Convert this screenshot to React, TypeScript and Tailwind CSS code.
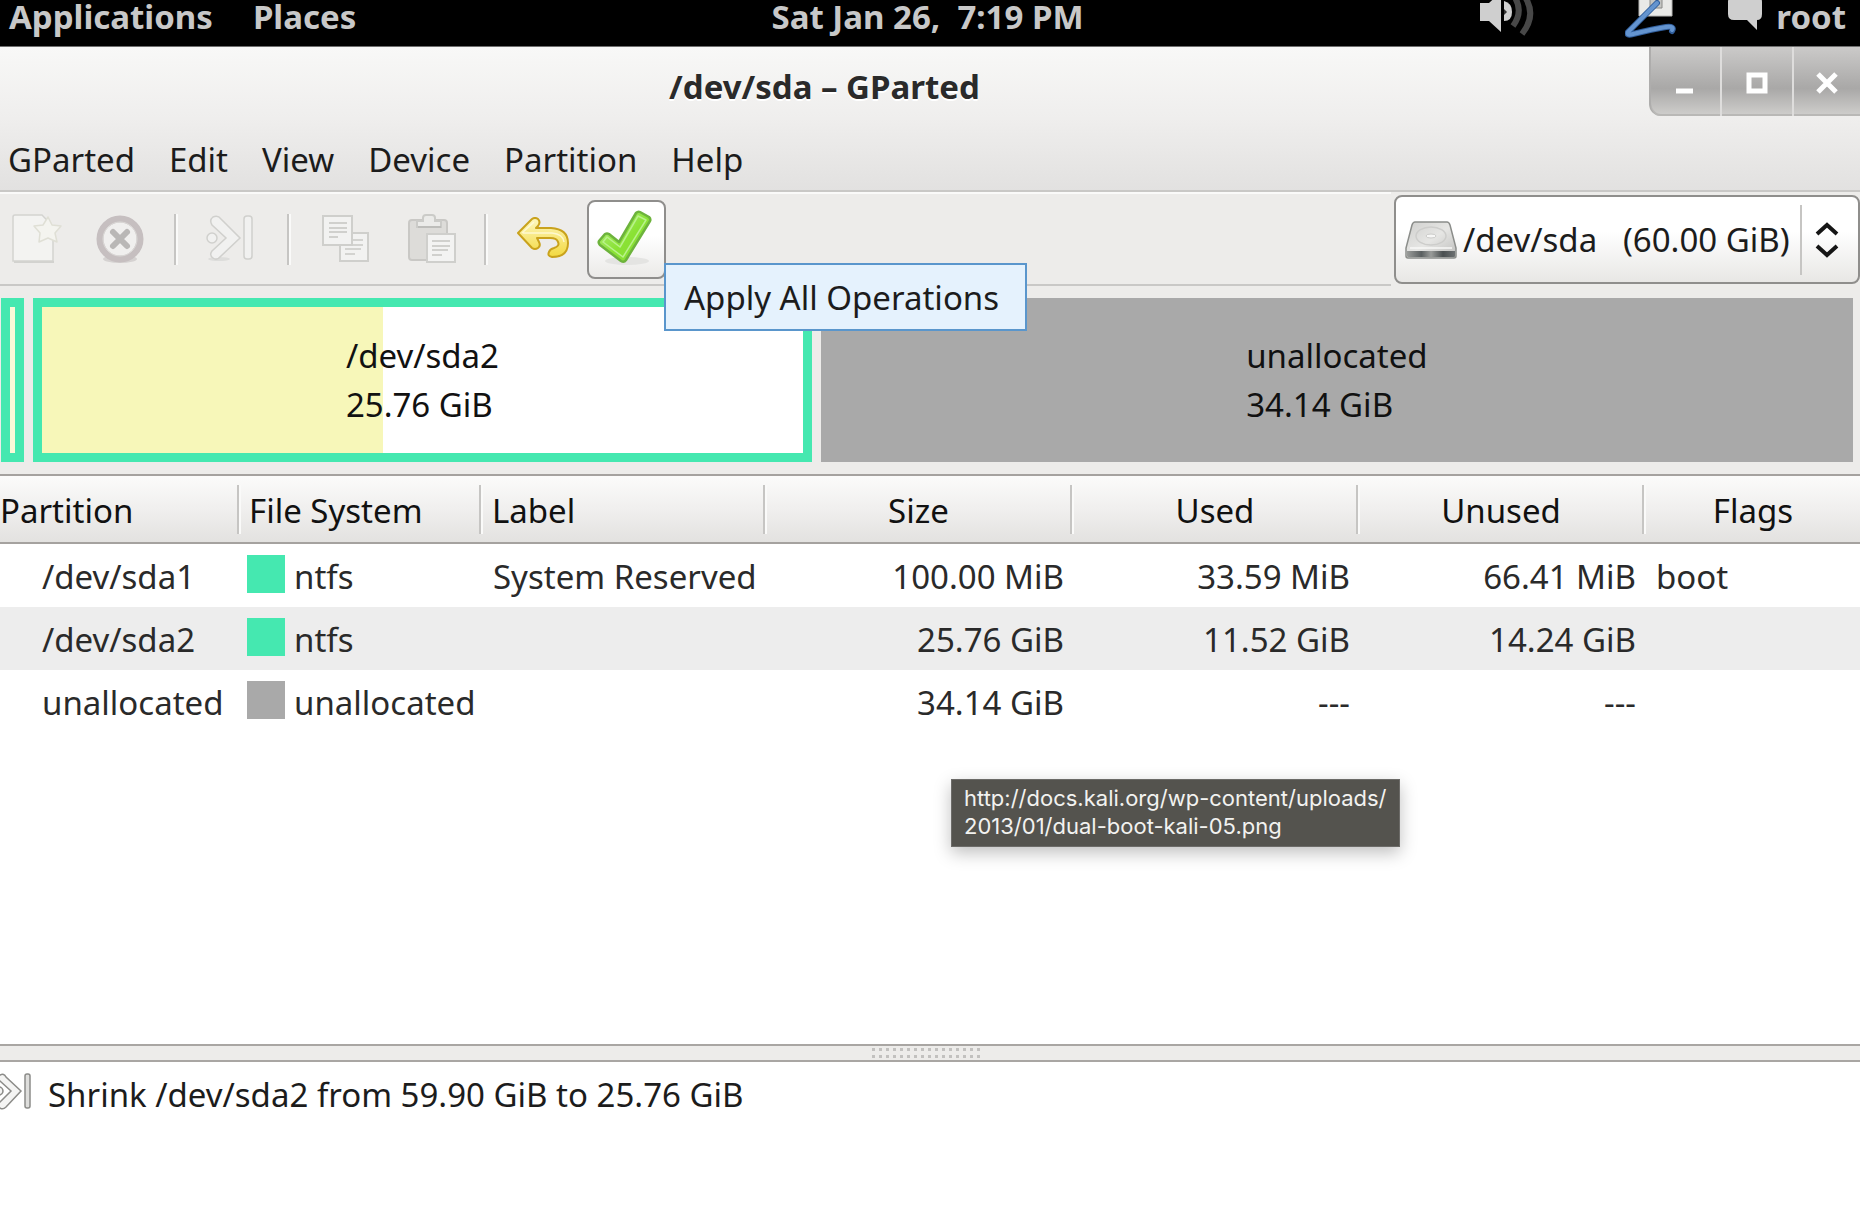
import React from "react";

const rows = [
  { name: "/dev/sda1", fs: "ntfs", color: "bg-[#45e8b0]", label: "System Reserved", size: "100.00 MiB", used: "33.59 MiB", unused: "66.41 MiB", flags: "boot" },
  { name: "/dev/sda2", fs: "ntfs", color: "bg-[#45e8b0]", label: "", size: "25.76 GiB", used: "11.52 GiB", unused: "14.24 GiB", flags: "" },
  { name: "unallocated", fs: "unallocated", color: "bg-[#a9a9a9]", label: "", size: "34.14 GiB", used: "---", unused: "---", flags: "" },
];

const columns = [
  { title: "Partition", width: "w-[241px]", cell: "justify-start" },
  { title: "File System", width: "w-[242px]", cell: "justify-start pl-[8px]" },
  { title: "Label", width: "w-[284px]", cell: "justify-start pl-[9px]" },
  { title: "Size", width: "w-[307px]", cell: "justify-center" },
  { title: "Used", width: "w-[286px]", cell: "justify-center" },
  { title: "Unused", width: "w-[286px]", cell: "justify-center" },
  { title: "Flags", width: "", cell: "justify-center" },
];

function SpeakerIcon() {
  return (
    <svg width="56" height="36" viewBox="0 0 56 36" fill="none" aria-hidden="true">
      <path d="M0 3h9L21-8V32L9 21H0z" fill="#cfcfcf" />
      <path d="M24 1q8 2 8 11t-8 9z" fill="#cfcfcf" />
      <path d="M24 9l3 3-3 3z" fill="#333" />
      <path d="M34-4q10 15-1 30" stroke="#484848" strokeWidth="6" />
      <path d="M43-6q15 20-1 40" stroke="#484848" strokeWidth="6" />
    </svg>
  );
}

function TabletIcon() {
  return (
    <svg width="52" height="42" viewBox="0 0 52 42" fill="none" aria-hidden="true">
      <path d="M14-4h33v20H14z" fill="#e9e9e7" stroke="#b5b5b3" strokeWidth="1" />
      <path d="M25-4h12V8H25z" fill="#c5c5c2" stroke="#8a8a88" />
      <path d="M32 3L3 32q-2 4 5 2Q28 29 41 27q9-1 6 4" stroke="#315f9d" strokeWidth="6" strokeLinecap="round" strokeLinejoin="round" />
      <path d="M32 3L3 32q-2 4 5 2Q28 29 41 27q9-1 6 3" stroke="#6494cf" strokeWidth="4" strokeLinecap="round" strokeLinejoin="round" />
    </svg>
  );
}

function ChatIcon() {
  return (
    <svg width="34" height="30" viewBox="0 0 34 30" aria-hidden="true">
      <path d="M6-4h22q6 0 6 6v12q0 6-5 6v10L19 20H6q-6 0-6-6V2q0-6 6-6z" fill="#cfcfcf" />
    </svg>
  );
}

function NewIcon() {
  return (
    <svg width="50" height="52" viewBox="0 0 50 52" aria-hidden="true">
      <path d="M2 49h40" stroke="#d2d2cf" strokeWidth="2" />
      <path d="M3 2h27q11 10 11 20v26H1V4q0-2 2-2z" fill="#f3f3f1" stroke="#d3d3d0" strokeWidth="1.5" />
      <path d="M36 4l4 8 9 1-6 7 2 9-9-4-9 4 1-9-6-7 9-1z" fill="#f4f4ef" stroke="#dfdfd5" strokeWidth="1.5" strokeLinejoin="round" />
    </svg>
  );
}

function DeleteIcon() {
  return (
    <svg width="48" height="50" viewBox="0 0 48 50" fill="none" aria-hidden="true">
      <ellipse cx="24" cy="45" rx="17" ry="4" fill="#d5d2d1" />
      <circle cx="24" cy="25" r="20" fill="#f0efee" stroke="#c6bfc0" strokeWidth="7" />
      <circle cx="24" cy="25" r="17" stroke="#dcdad8" strokeWidth="1" />
      <path d="M17 18l14 14M31 18L17 32" stroke="#b9b7b6" strokeWidth="6" strokeLinecap="round" />
    </svg>
  );
}

function ResizeIcon() {
  return (
    <svg width="48" height="48" viewBox="0 0 48 48" fill="#f1f1f0" stroke="#d0d0cd" strokeWidth="1.5" aria-hidden="true">
      <ellipse cx="13" cy="44" rx="11" ry="2" fill="#dddddb" stroke="none" />
      <circle cx="6" cy="23" r="5" />
      <path d="M7 2q5-2 8 2l19 19-19 18q-4 5-8 2-4-3-1-7l14-13L6 10q-3-5 1-8z" />
      <rect x="38" y="1" width="8" height="43" rx="3" />
    </svg>
  );
}

function CopyIcon() {
  return (
    <svg width="48" height="48" viewBox="0 0 48 48" fill="#f2f2f1" stroke="#cfcfcc" strokeWidth="2" aria-hidden="true">
      <path d="M18 18h28v28H18z" />
      <path d="M23 25h18M23 30h18M23 34h16M23 39h10" stroke="#d3d3d0" />
      <path d="M1 1h29v29H1z" />
      <path d="M7 8h18M7 13h18M7 17h18M7 22h9" stroke="#d0d0cd" />
    </svg>
  );
}

function PasteIcon() {
  return (
    <svg width="48" height="50" viewBox="0 0 48 50" strokeWidth="2" aria-hidden="true">
      <rect x="1" y="6" width="38" height="40" rx="3" fill="#dddcd9" stroke="#c9c8c5" />
      <path d="M9 7h6V4q0-3 3-3h6q3 0 3 3v3h6v6H9z" fill="#ebebe9" stroke="#cbcbc8" />
      <path d="M10 13h23" stroke="#bdbdba" />
      <path d="M19 20h28v28H19z" fill="#f3f3f2" stroke="#cfcfcc" />
      <path d="M24 27h18M24 32h18M24 36h16M24 41h10" stroke="#d0d0cd" />
    </svg>
  );
}

function UndoIcon() {
  return (
    <svg width="52" height="44" viewBox="0 0 52 44" aria-hidden="true">
      <defs>
        <linearGradient id="gold" x1="0" y1="0" x2="0" y2="1">
          <stop offset="0" stopColor="#fdf7c0" />
          <stop offset="1" stopColor="#f3d93f" />
        </linearGradient>
      </defs>
      <path d="M1 16L15 2q3-2 6 0 3 3 0 7l-2 2h15q17 1 17 15 0 14-16 14-5-1-3-5 1-3 5-4 6-2 4-6-1-4-8-4H20l2 4q2 4-1 6-3 2-6 0z" fill="url(#gold)" stroke="#c9a21c" strokeWidth="2" strokeLinejoin="round" />
      <path d="M5 16L17 5M6 16h29q11 1 12 9" fill="none" stroke="#fffbe0" strokeWidth="1.5" opacity=".8" />
    </svg>
  );
}

function CheckIcon() {
  return (
    <svg width="56" height="56" viewBox="0 0 56 56" aria-hidden="true">
      <defs>
        <linearGradient id="leaf" x1="0" y1="0" x2="1" y2="1">
          <stop offset="0" stopColor="#b5ef86" />
          <stop offset="0.55" stopColor="#8ae234" />
          <stop offset="1" stopColor="#84dc35" />
        </linearGradient>
      </defs>
      <ellipse cx="30" cy="51" rx="22" ry="4" fill="#e4e4e2" />
      <path d="M2 31l6-7q2-1 4 0l10 8L39 3q2-2 4-1l9 5q2 2 1 4L29 50q-2 3-5 1L3 35q-2-2-1-4z" fill="url(#leaf)" stroke="#6db33c" strokeWidth="2.5" strokeLinejoin="round" />
      <path d="M6 32l4-5 13 10L41 6l8 4-23 37z" fill="none" stroke="#b9f28b" strokeWidth="1.5" strokeLinejoin="round" />
    </svg>
  );
}

function DiskIcon() {
  return (
    <svg width="52" height="38" viewBox="0 0 52 38" aria-hidden="true">
      <defs>
        <linearGradient id="steel" x1="0" y1="0" x2="1" y2="1">
          <stop offset="0" stopColor="#cfcfcd" />
          <stop offset="0.5" stopColor="#e6e6e4" />
          <stop offset="1" stopColor="#bdbdbb" />
        </linearGradient>
        <linearGradient id="front" x1="0" y1="0" x2="1" y2="0">
          <stop offset="0" stopColor="#9a9c9a" />
          <stop offset="0.3" stopColor="#5a5f60" />
          <stop offset="0.5" stopColor="#9a9c9a" />
          <stop offset="0.75" stopColor="#4a4f50" />
          <stop offset="1" stopColor="#6c7071" />
        </linearGradient>
      </defs>
      <path d="M10 1h32q2 0 3 3l6 23v8q0 2-2 2H3q-2 0-2-2v-8L7 4q1-3 3-3z" fill="url(#steel)" stroke="#8b8d8a" strokeWidth="1.5" />
      <path d="M2 30h48v5q0 1-1 1H3q-1 0-1-1z" fill="url(#front)" />
      <ellipse cx="26" cy="15" rx="15" ry="9" fill="none" stroke="#cdcdcb" strokeWidth="1.5" />
      <ellipse cx="26" cy="15" rx="5" ry="2" fill="#f7f7f6" stroke="#cbcbc9" />
      <path d="M5 27h42" stroke="#f8f8f7" strokeWidth="1.5" />
    </svg>
  );
}

function ToolSeparator() {
  return <div className="h-[51px] w-[4px] border-l-2 border-r-2 border-l-[#c6c5c3] border-r-[#fafaf9]" />;
}

function WindowButton({ label, children }: { label: string; children: React.ReactNode }) {
  return (
    <button
      aria-label={label}
      className="flex h-[69px] w-[72px] items-center justify-center border-l-2 border-[#dedddc] bg-[linear-gradient(to_bottom,#cbcac9,#a9a8a7_60%,#d0cfcd)] pt-[2px] shadow-[inset_0_-2px_0_#b9b8b6] first:w-[71px] first:rounded-bl-[12px] first:border-[#aeadac] last:w-[68px]"
    >
      {children}
    </button>
  );
}

export default function App() {
  return (
    <div className="flex min-h-screen w-full flex-col bg-white font-['Noto_Sans',sans-serif] text-[33px] leading-[44px] text-[#1c1c1c]">
      <header className="flex h-[47px] items-start border-b border-[#6e6e6e] bg-black pr-[14px] pl-[9px] leading-[34px] font-bold text-[#c8c8c8]">
        <nav className="flex flex-1 gap-[40px]">
          <button>Applications</button>
          <button>Places</button>
        </nav>
        <time className="whitespace-pre">Sat Jan 26,  7:19 PM</time>
        <div className="flex flex-1 items-start justify-end">
          <button aria-label="Volume" className="mr-[89px]"><SpeakerIcon /></button>
          <button aria-label="Tablet" className="mr-[51px]"><TabletIcon /></button>
          <button className="flex items-start gap-[14px]"><ChatIcon />root</button>
        </div>
      </header>

      <div className="flex h-[145px] flex-col border-b-2 border-[#c9c8c6] bg-[linear-gradient(to_bottom,#f8f8f7,#efeeed_50%,#e2e1e0)]">
        <div className="flex flex-1 items-start">
          <h1 className="flex-1 pt-[18px] text-center font-bold text-[#2a2a2a] [text-shadow:0_2px_0_#ffffff]">/dev/sda – GParted</h1>
          <div className="flex">
            <WindowButton label="Minimize">
              <svg width="22" height="22" viewBox="0 0 22 22" aria-hidden="true"><path d="M1 19h17" stroke="#fff" strokeWidth="5" /></svg>
            </WindowButton>
            <WindowButton label="Maximize">
              <svg width="22" height="22" viewBox="0 0 22 22" aria-hidden="true"><path d="M3 3h16v16H3z" stroke="#fff" strokeWidth="5" fill="none" /></svg>
            </WindowButton>
            <WindowButton label="Close">
              <svg width="22" height="22" viewBox="0 0 22 22" aria-hidden="true"><path d="M2 2l18 18M20 2L2 20" stroke="#fff" strokeWidth="5" /></svg>
            </WindowButton>
          </div>
        </div>
        <nav className="flex gap-[34px] pb-[8px] pl-[8px]">
          <button>GParted</button>
          <button>Edit</button>
          <button>View</button>
          <button>Device</button>
          <button>Partition</button>
          <button>Help</button>
        </nav>
      </div>

      <div className="flex h-[94px] bg-[#edecea]">
        <div className="flex flex-1 items-center border-t-2 border-b-2 border-t-[#fafaf9] border-b-[#c9c8c6] pl-[12px]">
          <button aria-label="New" className="mr-[34px]"><NewIcon /></button>
          <button aria-label="Delete" className="mr-[30px]"><DeleteIcon /></button>
          <ToolSeparator />
          <button aria-label="Resize/Move" className="mr-[33px] ml-[28px]"><ResizeIcon /></button>
          <ToolSeparator />
          <button aria-label="Copy" className="mr-[38px] ml-[31px]"><CopyIcon /></button>
          <button aria-label="Paste" className="mr-[28px]"><PasteIcon /></button>
          <ToolSeparator />
          <button aria-label="Undo Last Operation" className="mr-[18px] ml-[29px]"><UndoIcon /></button>
          <div className="relative">
            <button aria-describedby="apply-tip" aria-label="Apply All Operations" className="flex h-[79px] w-[79px] items-center justify-center rounded-[8px] border-2 border-[#8f8e8c] bg-[linear-gradient(to_bottom,#ffffff_45%,#ebeae8)] pr-[3px] pb-[2px]">
              <CheckIcon />
            </button>
            <div id="apply-tip" role="tooltip" className="absolute top-[63px] left-[77px] z-10 min-w-[363px] border-2 border-[#5a96cc] bg-[#e5f2fd] px-[18px] pt-[11px] pb-[9px] whitespace-nowrap">
              Apply All Operations
            </div>
          </div>
        </div>
        <div className="mt-[3px] mb-[2px] ml-[3px] flex w-[466px] items-center rounded-[8px] border-2 border-[#8f8e8c] bg-[linear-gradient(to_bottom,#ffffff_40%,#e8e7e5)] pl-[9px]">
          <DiskIcon />
          <select aria-label="Device" className="h-full min-w-0 flex-1 appearance-none bg-transparent pl-[6px]">
            <option>{"/dev/sda\u00a0\u00a0 (60.00 GiB)"}</option>
          </select>
          <div className="h-[70px] border-l-2 border-[#c6c5c3]" />
          <svg className="mr-[19px] ml-[13px]" width="24" height="36" viewBox="0 0 24 36" fill="none" stroke="#151515" strokeWidth="4" aria-hidden="true">
            <path d="M2 12l10-9 10 9M2 24l10 9 10-9" />
          </svg>
        </div>
      </div>

      <div className="grid h-[188px] grid-cols-[23px_2576fr_3414fr] gap-[9px] bg-[#edecea] pt-[12px] pr-[7px] pb-[12px] pl-px text-[#111]">
        <div className="border-[9px] border-[#45e8b0] bg-[#fbf9d8]" />
        <div className="flex items-center justify-center border-[9px] border-[#45e8b0] bg-[linear-gradient(to_right,#f7f7b9_44.8%,#ffffff_44.8%)]">
          <p className="leading-[49px]">/dev/sda2<br />25.76 GiB</p>
        </div>
        <div className="flex items-center justify-center bg-[#a9a9a9]">
          <p className="leading-[49px]">unallocated<br />34.14 GiB</p>
        </div>
      </div>

      <main className="relative flex-1">
        <table className="w-full table-fixed border-separate border-spacing-0">
          <colgroup>
            {columns.map((c) => <col key={c.title} className={c.width} />)}
          </colgroup>
          <thead>
            <tr className="h-[70px] bg-[linear-gradient(to_bottom,#fcfcfb,#f0efee_50%,#e2e1df)]">
              {columns.map((c, i) => (
                <th key={c.title} scope="col" className="border-t-2 border-b-2 border-[#a5a29f] p-0 font-normal text-[#111]">
                  <div className="flex h-[49px] items-center">
                    <span className={`flex flex-1 pt-[4px] ${c.cell}`}>{c.title}</span>
                    {i < 6 && <span className="h-full w-[4px] border-r-2 border-l-2 border-l-[#c6c5c3] border-r-[#fafaf9]" />}
                  </div>
                </th>
              ))}
            </tr>
          </thead>
          <tbody>
            {rows.map((r) => (
              <tr key={r.name} className="h-[63px] text-[#2a2a2a] even:bg-[#ededed]">
                <td className="p-0 pt-[2px] pl-[42px]">{r.name}</td>
                <td className="p-0 pt-[2px] pl-[6px]">
                  <div className="flex items-center gap-[9px]">
                    <span className={`mb-[5px] h-[38px] w-[38px] shrink-0 ${r.color}`} />
                    {r.fs}
                  </div>
                </td>
                <td className="p-0 pt-[2px] pl-[10px] whitespace-nowrap">{r.label}</td>
                <td className="p-0 pt-[2px] pr-[10px] text-right">{r.size}</td>
                <td className="p-0 pt-[2px] pr-[10px] text-right">{r.used}</td>
                <td className="p-0 pt-[2px] pr-[10px] text-right">{r.unused}</td>
                <td className="p-0 pt-[2px] pl-[10px]">{r.flags}</td>
              </tr>
            ))}
          </tbody>
        </table>
        <div role="tooltip" className="absolute top-[305px] left-[951px] border border-[#6c6b68] bg-[#54534e] px-[12px] pt-[4px] pb-[6px] font-['Inter',sans-serif] text-[22px] leading-[28px] whitespace-nowrap text-[#f2f2f0] shadow-[0_6px_16px_rgba(0,0,0,0.25)]">
          http://docs.kali.org/wp-content/uploads/
          <br />
          2013/01/dual-boot-kali-05.png
        </div>
      </main>

      <div role="separator" className="flex h-[18px] items-center border-t-2 border-b-2 border-[#a9a6a3] bg-[#edecea] pl-[872px]">
        <svg width="112" height="12" viewBox="0 0 112 12" fill="#c2c1bf" aria-hidden="true">
          {Array.from({ length: 16 }, (_, i) => (
            <path key={i} d={`M${i * 7} 1h3v3h-3zM${i * 7} 8h3v3h-3z`} />
          ))}
        </svg>
      </div>
      <section className="flex h-[158px] items-start pt-[11px]">
        <svg className="mr-[17px]" width="31" height="38" viewBox="0 0 31 38" fill="#f4f4f3" stroke="#8c8c89" strokeWidth="1.5" aria-hidden="true">
          <circle cx="-1" cy="18" r="4" />
          <path d="M0 2q4-2 6 2l15 14L6 34q-3 3-6 1-3-3 0-6l11-11L0 8q-3-3 0-6z" />
          <rect x="25" y="1" width="5" height="34" rx="2" fill="#dededc" />
        </svg>
        <p>Shrink /dev/sda2 from 59.90 GiB to 25.76 GiB</p>
      </section>
    </div>
  );
}
